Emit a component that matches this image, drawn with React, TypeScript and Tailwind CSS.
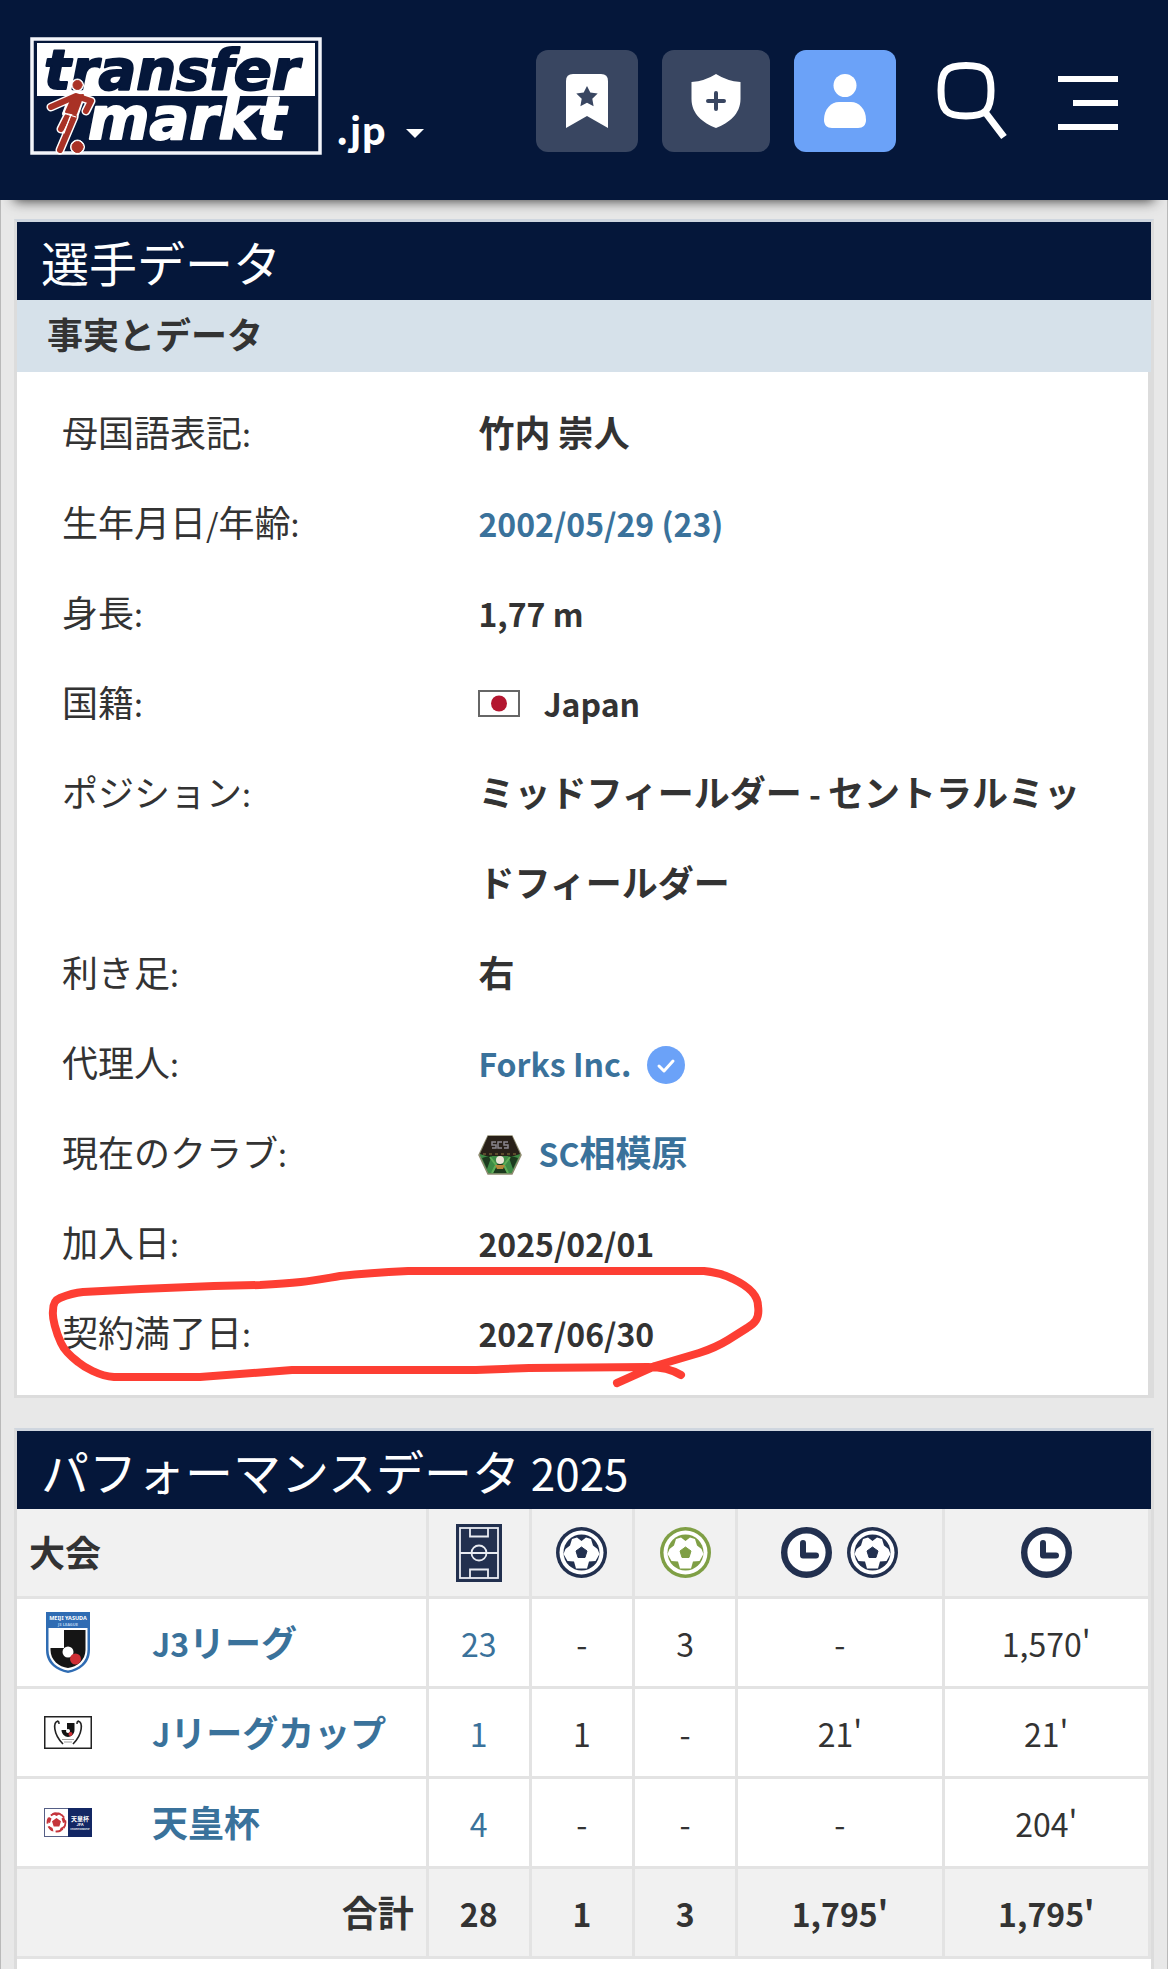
import React, { type ReactNode } from 'react';

/** Latin runs are set a little smaller than the Japanese text around them. */
function Mixed({ children }: { children: string }) {
  return (
    <>
      {children.split(/([\x20-\x7e]+)/).map((part, i) =>
        i % 2 ? (
          <span key={i} className="text-[32px] leading-none">
            {part}
          </span>
        ) : (
          part
        ),
      )}
    </>
  );
}

function Player() {
  return (
    <g strokeLinecap="round" strokeLinejoin="round">
      <g fill="#fff" stroke="#fff">
        <circle cx="47.5" cy="48" r="6" />
        <path d="M21 70 46 59 61 64 56 74M37 80 31 92M44 80 30 113" fill="none" strokeWidth="9" />
        <path d="M41 58 54 57 46 80 34 77Z" strokeWidth="4" />
        <circle cx="47.5" cy="110" r="7" />
      </g>
      <g fill="#a93226" stroke="#a93226">
        <circle cx="47.5" cy="48" r="4.5" />
        <path d="M21 70 46 59 61 64 56 74M37 80 31 92M44 80 30 113" fill="none" strokeWidth="6" />
        <path d="M43 59 53 58 46 77 36 75Z" strokeWidth="2" />
        <circle cx="47.5" cy="110" r="5.5" />
      </g>
      <path d="M33 76 46 80M40 80 34 96" fill="none" stroke="#fff" strokeWidth="1.3" />
    </g>
  );
}

function Logo() {
  return (
    <svg viewBox="0 0 292 118" className="h-[118px] w-[292px]" role="img" aria-label="transfermarkt">
      <rect x="2" y="2" width="288" height="114" fill="#05173a" stroke="#f3f5fa" strokeWidth="3.5" />
      <rect x="7" y="6" width="278" height="53" fill="#fff" />
      <g fontFamily="DejaVu Sans" fontWeight="700" fontStyle="italic" strokeWidth="2" strokeLinejoin="round">
        <text x="14" y="52" fontSize="56" fill="#05173a" stroke="#05173a">transfer</text>
        <text x="58" y="102" fontSize="59" fill="#fff" stroke="#fff">markt</text>
      </g>
      <Player />
    </svg>
  );
}

function Header() {
  return (
    <header className="relative z-10 flex h-[200px] items-start bg-[#05173a] shadow-[0_15px_12px_-14px_rgba(0,0,0,0.75)]">
      <a href="#home" className="mt-[37px] ml-[30px] block">
        <Logo />
      </a>
      <button type="button" className="mt-[99px] ml-3.5 flex items-center gap-5 text-[38px] leading-[60px] font-bold text-white">
        .jp
        <svg viewBox="0 0 18 9" className="mt-2 h-[9px] w-[18px] fill-white" aria-hidden="true">
          <path d="M0 0h18L9 9Z" />
        </svg>
      </button>
      <nav className="ml-auto flex items-start pt-[50px] pr-[50px]">
        <button type="button" aria-label="ウォッチリスト" className="mr-6 flex size-[102px] items-center justify-center rounded-xl bg-[#394661]">
          <svg viewBox="0 0 42 54" className="h-[54px] w-[42px]">
            <path d="M0 54V7Q0 0 7 0H35Q42 0 42 7V54L21 42Z" fill="#fff" />
            <path d="m21 12 3.3 6.5 7.4 1-5.4 5.3 1.3 7.4-6.6-3.4-6.6 3.4 1.3-7.4-5.4-5.3 7.4-1Z" fill="#394661" />
          </svg>
        </button>
        <button type="button" aria-label="クラブを追加" className="mr-6 flex h-[102px] w-[108px] items-center justify-center rounded-xl bg-[#394661]">
          <svg viewBox="0 0 50 54" className="h-[54px] w-[50px]">
            <path d="M25 0Q36 7 49.500 8V25C49.500 40 38 49 25 54 12 49 .5 40 .5 25V8Q14 7 25 0Z" fill="#fff" />
            <path d="M25 19V35M17 27H33" stroke="#394661" strokeWidth="4" strokeLinecap="round" />
          </svg>
        </button>
        <button type="button" aria-label="プロフィール" className="flex size-[102px] items-center justify-center rounded-xl bg-[#6ba2f8]">
          <svg viewBox="0 0 42 54" className="h-[54px] w-[42px] fill-white">
            <circle cx="21" cy="11.500" r="11.500" />
            <path d="M0 46C0 35 7 28 15 28H27C35 28 42 35 42 46 42 51 39 54 34 54H8C3 54 0 51 0 46Z" />
          </svg>
        </button>
        <button type="button" aria-label="検索" className="mt-3 ml-[41px]">
          <svg viewBox="0 0 70 78" className="h-[78px] w-[70px]" fill="none" stroke="#fff" strokeWidth="7">
            <path d="M4 28.500C4 9 9 3.500 29 3.500S54 9 54 28.500 49 54 29 54 4 48 4 28.500ZM48 50 67 75" />
          </svg>
        </button>
        <button type="button" aria-label="メニュー" className="mt-[26px] ml-[51px] flex w-[60px] flex-col items-end gap-[18px]">
          <span className="h-1.5 w-full bg-white" />
          <span className="h-1.5 w-[45px] bg-white" />
          <span className="h-1.5 w-full bg-white" />
        </button>
      </nav>
    </header>
  );
}

function Flag() {
  return (
    <svg viewBox="0 0 42 27" className="mr-[23px] inline-block h-[27px] w-[42px] align-baseline" role="img" aria-label="日本">
      <rect x="1" y="1" width="40" height="25" fill="#fff" stroke="#666" strokeWidth="2" />
      <circle cx="21" cy="13.500" r="8" fill="#b3162f" />
    </svg>
  );
}

function ClubCrest() {
  return (
    <svg viewBox="0 0 44 40" className="mr-4 inline-block h-10 w-11 align-[-8px]" role="img" aria-label="エンブレム">
      <path d="M10 1H34L43 20 34 39H10L1 20Z" fill="#3e8b46" stroke="#8f8b70" strokeWidth="1.5" />
      <path d="M10 1H34L42 19 36 21H8L2 19Z" fill="#282018" />
      <path d="M18 7H14V10H18V13H14M24 7H20V13H24M30 7H26V10H30V13H26" stroke="#8a868e" strokeWidth="1.5" fill="none" />
      <path d="M4 23 14 20 9 34ZM40 23 30 20 35 34ZM15 38 20 28H24L29 38Z" fill="#1c3a1e" />
      <path d="M12 22 18 30 14 38M32 22 26 30 30 38" stroke="#5fae57" strokeWidth="2" fill="none" />
      <circle cx="22" cy="25" r="4" fill="#eee6d8" />
      <path d="M17 30H27L25 34H19Z" fill="#b7873b" />
      <path d="M5 19H39" stroke="#6c5a33" strokeWidth="1.500" strokeDasharray="3 3" />
    </svg>
  );
}

function Verified() {
  return (
    <svg viewBox="0 0 38 38" className="ml-4 inline-block size-[38px] align-[-7px]" role="img" aria-label="認証済み">
      <circle cx="19" cy="19" r="19" fill="#6ba2f8" />
      <path d="m12 20 5 5 9-10" fill="none" stroke="#fff" strokeWidth="3" strokeLinecap="round" strokeLinejoin="round" />
    </svg>
  );
}

function Marking() {
  return (
    <svg viewBox="40 1260 730 130" className="pointer-events-none absolute -top-[26px] left-[23px] h-[130px] w-[730px]" aria-hidden="true">
      <path
        d="M681 1375Q668 1367 648 1367L529 1368 476 1370 292 1370Q250 1373 200 1377L114 1377C99 1376 84 1367 78 1362Q65 1352 61 1343C56 1332 52 1318 53 1311C53 1303 55 1300 60 1298Q72 1293 83 1292L141 1289 214 1286 260 1285C302 1283 310 1281 340 1276Q368 1273 408 1271L704 1271Q722 1273 733 1279C752 1288 758 1298 758 1306C760 1319 754 1324 747 1328L728 1340Q715 1348 699 1353 675 1360 655 1366L617 1383"
        fill="none"
        stroke="#fd3e33"
        strokeWidth="8"
        strokeLinecap="round"
        strokeLinejoin="round"
      />
    </svg>
  );
}

const link = 'text-[#3a729b]';

function PlayerFacts() {
  const rows: { label: string; value: ReactNode; marked?: boolean }[] = [
    { label: '母国語表記:', value: <Mixed>竹内 崇人</Mixed> },
    { label: '生年月日/年齢:', value: <a href="#birth" className={link}><Mixed>2002/05/29 (23)</Mixed></a> },
    { label: '身長:', value: <Mixed>1,77 m</Mixed> },
    { label: '国籍:', value: <><Flag /><Mixed>Japan</Mixed></> },
    { label: 'ポジション:', value: <Mixed>ミッドフィールダー - セントラルミッドフィールダー</Mixed> },
    { label: '利き足:', value: '右' },
    { label: '代理人:', value: <><a href="#agent" className={link}><Mixed>Forks Inc.</Mixed></a><Verified /></> },
    { label: '現在のクラブ:', value: <><ClubCrest /><a href="#club" className={link}><Mixed>SC相模原</Mixed></a></> },
    { label: '加入日:', value: <Mixed>2025/02/01</Mixed> },
    { label: '契約満了日:', value: <Mixed>2027/06/30</Mixed>, marked: true },
  ];
  return (
    <section className="border-3 border-[#dcdcdc] border-t-[#cfd6df] bg-white">
      <h2 className="h-[78px] bg-[#05173a] pl-6 text-[48px] leading-[78px] font-normal text-white">選手データ</h2>
      <h3 className="h-[72px] bg-[#d6e1ea] pl-[30px] text-[36px] leading-[66px] font-bold">事実とデータ</h3>
      <dl className="border-r-3 border-[#dcdcdc] pt-[14px] pb-[19px] text-[36px] leading-[90px]">
        {rows.map((r) => (
          <div key={r.label} className="relative flex">
            <dt className="w-[40.8%] shrink-0 pl-[45px]"><Mixed>{r.label}</Mixed></dt>
            <dd className="min-w-0 flex-1 pr-[46px] font-bold break-all">{r.value}</dd>
            {r.marked && <Marking />}
          </div>
        ))}
      </dl>
    </section>
  );
}

function PitchIcon() {
  return (
    <svg viewBox="0 0 46 58" className="h-[58px] w-[46px]" role="img" aria-label="出場">
      <rect width="46" height="58" fill="#22304f" />
      <g fill="none" stroke="#e9ecf2" strokeWidth="1.8">
        <rect x="4" y="4" width="38" height="50" />
        <path d="M4 29H42M14 4V12.500H32V4M14 54V45.500H32V54" />
        <circle cx="23" cy="29" r="7.500" />
      </g>
    </svg>
  );
}

function Ball({ color, label }: { color: string; label: string }) {
  return (
    <svg viewBox="0 0 51 51" className="size-[51px]" role="img" aria-label={label}>
      <circle cx="25.500" cy="25.500" r="25.500" fill={color} />
      <circle cx="25.500" cy="25.500" r="22" fill="#fff" />
      <circle cx="25.500" cy="25.500" r="18" fill={color} />
      <path
        d="M25.500 14 30 10.500 35 12 37 18.500 41.500 22 43.500 27 39.500 34 33 34.500 31 41.500H20L18 34.500 11.500 34 7.500 27 9.500 22 14 18.500 16 12 21 10.500Z"
        fill="#fff"
      />
      <path d="M25.500 20 31 24 29 30.500H22L20 24Z" fill={color} stroke={color} strokeLinejoin="round" />
    </svg>
  );
}

function Clock({ label }: { label: string }) {
  return (
    <svg viewBox="0 0 51 51" className="size-[51px]" role="img" aria-label={label}>
      <circle cx="25.500" cy="25.500" r="22.300" fill="#fff" stroke="#22304f" strokeWidth="6.400" />
      <path d="M22 16V28.500H35" fill="none" stroke="#22304f" strokeWidth="6" strokeLinecap="round" strokeLinejoin="round" />
    </svg>
  );
}

function J3Badge() {
  return (
    <svg viewBox="0 0 44 61" className="mx-0.5 h-[61px] w-11" aria-hidden="true">
      <path d="M0 0H44V38C44 52 33 59 22 61 11 59 0 52 0 38Z" fill="#2f6cb3" />
      <path d="M2.500 16H41.500V38C41.500 50 32 57 22 58.500 12 57 2.500 50 2.500 38Z" fill="#fff" />
      <path d="M18 18H39.500V38C39.500 48 31 55 22 56 13 55 4.500 48 4.500 38V36H18Z" fill="#151515" />
      <circle cx="22" cy="40" r="5.500" fill="#fff" />
      <circle cx="29.500" cy="47" r="5.500" fill="#cf2e35" />
      <g fill="#fff" fontFamily="Noto Sans" fontWeight="700" textAnchor="middle">
        <text x="22" y="8" fontSize="5.500">MEIJI YASUDA</text>
        <text x="22" y="13.500" fontSize="4" fill="#b9d3ef">J3 LEAGUE</text>
      </g>
    </svg>
  );
}

function CupBadge() {
  return (
    <svg viewBox="0 0 48 33" className="h-[33px] w-12" aria-hidden="true">
      <rect x=".75" y=".75" width="46.500" height="31.500" fill="#fff" stroke="#222" strokeWidth="1.500" />
      <path d="M14 5C9 6 9 18 19 28M34 5C39 6 39 18 29 28" fill="none" stroke="#222" strokeWidth="1.600" />
      <path d="M13 6Q15 4 15 8M35 6Q33 4 33 8" fill="none" stroke="#222" strokeWidth="1.500" />
      <path d="M23 7H30.500V14C30.500 18 27 21 24 21 21 21 17.500 18 17.500 14H23Z" fill="#151515" />
      <circle cx="24" cy="15" r="2" fill="#fff" />
      <circle cx="26.500" cy="18" r="2" fill="#cf2e35" />
      <path d="M18 23.500H30M20 26H28" stroke="#888" strokeWidth=".8" />
    </svg>
  );
}

function EmperorsBadge() {
  return (
    <svg viewBox="0 0 48 29" className="h-[29px] w-12" aria-hidden="true">
      <rect x=".5" y=".5" width="47" height="28" fill="#fff" stroke="#555f86" />
      <rect x="24" width="24" height="29" fill="#132764" />
      <circle cx="12.500" cy="14.500" r="9" fill="#fff" stroke="#c5353c" strokeWidth="1.800" strokeDasharray="6 3" />
      <path d="M12.500 10 17 13.300 15.300 18.500H9.700L8 13.300ZM8 5.500 12.500 8 17 5.500 15 4.500H10ZM3 14 5 9 7.500 10.500 6 15ZM22 14 20 9 17.500 10.500 19 15ZM6 22 5 18 8.500 20 9.500 23.500ZM19 22 20 18 16.500 20 15.500 23.500Z" fill="#c5353c" />
      <g fill="#fff" fontFamily="Noto Sans CJK JP" fontWeight="700" textAnchor="middle">
        <text x="36" y="13" fontSize="6">天皇杯</text>
        <text x="36" y="18" fontSize="4">JFA</text>
        <text x="36" y="21.500" fontSize="2.500">CHAMPIONSHIP</text>
      </g>
    </svg>
  );
}

const cell = 'h-[90px] border-r-3 border-b-3 border-[#e3e3e3] p-0 text-center';

function Performance() {
  const rows: { badge: ReactNode; name: string; cells: string[] }[] = [
    { badge: <J3Badge />, name: 'J3リーグ', cells: ['23', '-', '3', '-', "1,570'"] },
    { badge: <CupBadge />, name: 'Jリーグカップ', cells: ['1', '1', '-', "21'", "21'"] },
    { badge: <EmperorsBadge />, name: '天皇杯', cells: ['4', '-', '-', '-', "204'"] },
  ];
  return (
    <section className="mt-[30px] border-3 border-b-0 border-[#dcdcdc] border-t-[#cfd6df] bg-white pb-[10px]">
      <h2 className="h-[78px] bg-[#05173a] pl-6 text-[48px] leading-[78px] font-normal text-white">
        パフォーマンスデータ <span className="text-[44px] leading-none">2025</span>
      </h2>
      <table className="w-full table-fixed border-separate border-spacing-0 text-[32px] leading-[48px]">
        <colgroup>
          <col className="w-[36.3%]" />
          <col className="w-[9.1%]" />
          <col className="w-[9.1%]" />
          <col className="w-[9.1%]" />
          <col />
          <col />
        </colgroup>
        <thead className="bg-[#f1f1f1]">
          <tr>
            <th scope="col" className={cell}><div className="pb-1 pl-3 text-left text-[36px] font-bold">大会</div></th>
            <th scope="col" className={cell}><div className="flex justify-center"><PitchIcon /></div></th>
            <th scope="col" className={cell}><div className="flex justify-center"><Ball color="#22304f" label="ゴール" /></div></th>
            <th scope="col" className={cell}><div className="flex justify-center"><Ball color="#7f9f45" label="アシスト" /></div></th>
            <th scope="col" className={cell}>
              <div className="flex justify-center gap-[15px]"><Clock label="分" /><Ball color="#22304f" label="ゴールあたり" /></div>
            </th>
            <th scope="col" className={cell}><div className="flex justify-center"><Clock label="出場時間" /></div></th>
          </tr>
        </thead>
        <tbody>
          {rows.map((r) => (
            <tr key={r.name}>
              <td className={cell}>
                <div className="flex items-center pl-[27px]">
                  {r.badge}
                  <a href="#competition" className="ml-[60px] pb-1 text-[36px] font-bold text-[#3a729b]"><Mixed>{r.name}</Mixed></a>
                </div>
              </td>
              {r.cells.map((c, i) => (
                <td key={i} className={cell}>
                  {i === 0 ? <a href="#matches" className="text-[#3a729b]">{c}</a> : c}
                </td>
              ))}
            </tr>
          ))}
        </tbody>
        <tfoot className="bg-[#f1f1f1] font-bold">
          <tr>
            <th scope="row" className={cell}><div className="pr-3 pb-1 text-right text-[36px]">合計</div></th>
            {['28', '1', '3', "1,795'", "1,795'"].map((c, i) => (
              <td key={i} className={cell}>{c}</td>
            ))}
          </tr>
        </tfoot>
      </table>
    </section>
  );
}

export default function App() {
  return (
    <div lang="ja" className="overflow-x-hidden bg-[#e8e8e8] font-['Noto_Sans_CJK_JP',sans-serif] text-[#333]">
      <Header />
      <main className="border-x border-[#b9b9b9] px-[13px] pt-[19px]">
        <PlayerFacts />
        <Performance />
      </main>
    </div>
  );
}
